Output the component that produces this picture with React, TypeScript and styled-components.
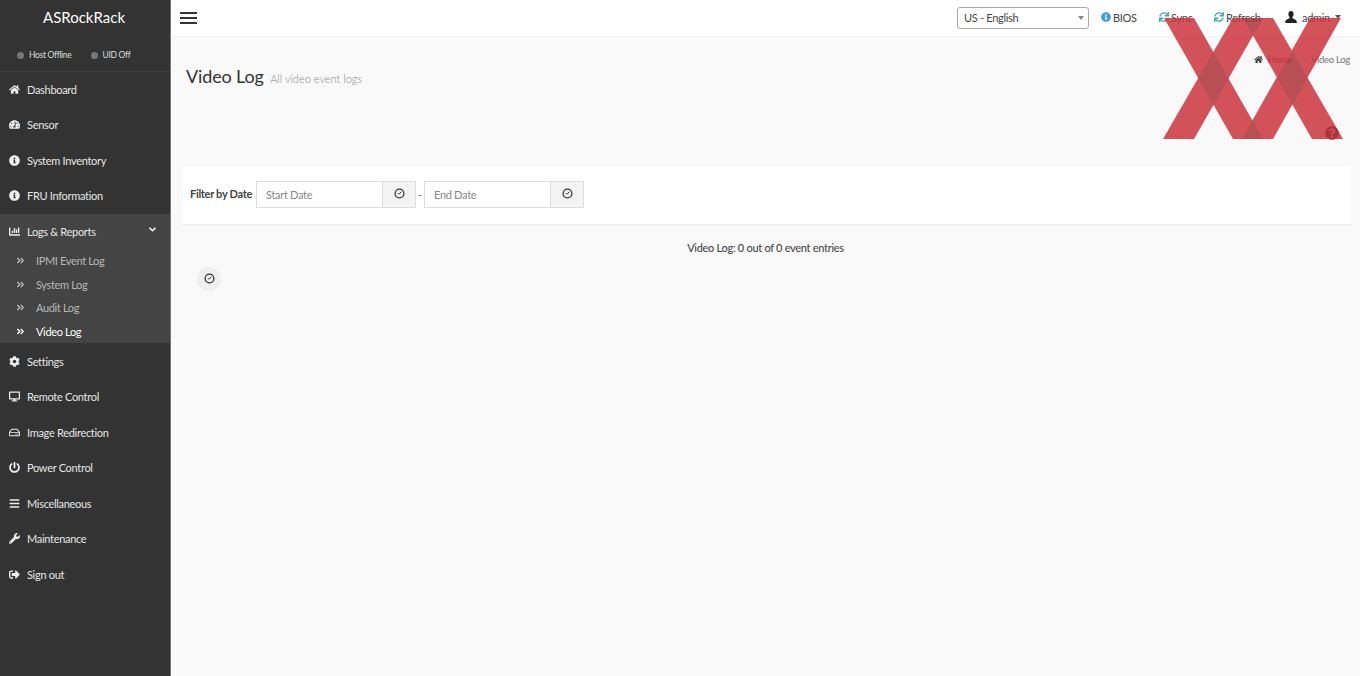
import styled, { createGlobalStyle } from "styled-components";
import type { ReactNode } from "react";
import {
  FaAngleDoubleRight,
  FaAngleDown,
  FaBars,
  FaChartBar,
  FaCog,
  FaDesktop,
  FaHome,
  FaInfoCircle,
  FaPowerOff,
  FaQuestionCircle,
  FaRegHdd,
  FaSignOutAlt,
  FaSync,
  FaTachometerAlt,
  FaWrench,
} from "react-icons/fa";

const GlobalStyle = createGlobalStyle`
  html, body {
    margin: 0;
    height: 100%;
    overflow: hidden;
    background: #f9f9f9;
  }

  body {
    font-family: "Lato", "Noto Sans", sans-serif;
    font-size: 11px;
    letter-spacing: -0.3px;
    color: #444;
  }
`;

const Shell = styled.div`
  display: flex;
  width: 1360px;
  height: 676px;
  position: relative;
  overflow: hidden;
`;

const Sidebar = styled.aside`
  width: 170px;
  flex: none;
  background: #333;
  border-right: 1px solid #777;
`;

const Brand = styled.div`
  height: 36px;
  display: flex;
  align-items: center;
  justify-content: center;
  padding-right: 2px;
  padding-bottom: 2px;
  box-sizing: border-box;
  color: #fff;
  font-size: 15px;
  letter-spacing: 0;
`;

const StatusRow = styled.div`
  height: 35.5px;
  box-sizing: border-box;
  padding: 4px 0 0 17px;
  display: flex;
  align-items: center;
  gap: 19px;
  border-bottom: 1px solid #3d3d3d;
  color: #ddd;
  font-size: 8.5px;
`;

const StatusItem = styled.span`
  display: flex;
  align-items: center;
  gap: 5px;
`;

const StatusDot = styled.i`
  width: 7px;
  height: 7px;
  border-radius: 50%;
  background: #777;
`;

const NavRow = styled.div<{ $open?: boolean }>`
  height: 35.5px;
  display: flex;
  align-items: center;
  padding-left: 9px;
  color: #e6e6e6;
  background: ${(p) => (p.$open ? "#444" : "transparent")};
`;

const NavIcon = styled.span`
  width: 18px;
  flex: none;
  display: flex;
  align-items: center;
  font-size: 11px;
  color: #eee;
`;

const Chevron = styled.span`
  margin-left: auto;
  margin-right: 12px;
  margin-top: -4px;
  display: flex;
  font-size: 11px;
`;

const SubMenu = styled.div`
  background: #444;
`;

const SubRow = styled.div<{ $active?: boolean }>`
  height: 23.6px;
  display: flex;
  align-items: center;
  padding-left: 16px;
  gap: 11px;
  letter-spacing: -0.35px;
  color: ${(p) => (p.$active ? "#fff" : "#b8b8b8")};
`;

const Main = styled.main`
  flex: 1;
  min-width: 0;
  display: flex;
  flex-direction: column;
`;

const Topbar = styled.header`
  height: 36px;
  background: #fff;
  border-bottom: 1px solid #f2f2f2;
  display: flex;
  align-items: center;
  padding: 0 15px 0 9px;
  color: #444;
`;

const BurgerIcon = styled.span`
  display: flex;
  flex-direction: column;
  gap: 3px;
  width: 17px;
  margin-right: auto;

  i {
    height: 2px;
    background: #333;
  }
`;

const LangSelect = styled.div`
  width: 132px;
  height: 22px;
  box-sizing: border-box;
  border: 1px solid #aaa;
  border-radius: 3px;
  display: flex;
  align-items: center;
  justify-content: space-between;
  padding: 0 4px 2px 6px;
  margin-right: 12px;

  &::after {
    content: "";
    margin-top: 2px;
    border-left: 3.5px solid transparent;
    border-right: 3.5px solid transparent;
    border-top: 4px solid #888;
  }
`;

const TopLink = styled.span<{ $tint?: string; $width: number }>`
  width: ${(p) => p.$width}px;
  display: flex;
  align-items: center;
  gap: 2px;
  margin-top: -2px;

  svg {
    color: ${(p) => p.$tint ?? "#333"};
    font-size: 10px;
  }
`;

const Caret = styled.i`
  border-left: 3.5px solid transparent;
  border-right: 3.5px solid transparent;
  border-top: 4px solid #555;
  margin-left: 3px;
`;

const PageHead = styled.section`
  height: 129px;
  box-sizing: border-box;
  display: flex;
  justify-content: space-between;
  align-items: flex-start;
  padding: 17px 10px 0 15px;
`;

const Title = styled.h1`
  margin: 10px 0 0;
  font-size: 18px;
  font-weight: 400;
  letter-spacing: -0.15px;
  color: #333;
  line-height: 24px;

  small {
    margin-left: 2px;
    font-size: 11px;
    font-weight: 300;
    letter-spacing: 0;
    color: #888;
  }
`;

const Crumbs = styled.div`
  display: flex;
  align-items: center;
  gap: 5px;
  font-size: 9.5px;
  color: #444;

  span + span {
    margin-left: 14px;
    color: #777;
  }
`;

const HelpIcon = styled.span`
  position: absolute;
  left: 1325px;
  top: 126px;
  color: #a9343c;
  font-size: 14px;
  display: flex;
  z-index: 3;
`;

const FilterCard = styled.section`
  margin: 0 9px 0 12px;
  height: 58px;
  box-sizing: border-box;
  background: #fff;
  box-shadow: 0 1px 1px rgba(0, 0, 0, 0.05);
  display: flex;
  align-items: center;
  padding: 0 0 2px 7px;
`;

const FilterLabel = styled.label`
  font-weight: 700;
  color: #444;
  width: 66px;
  flex: none;
  white-space: nowrap;
  margin-top: -1px;
`;

const DateGroup = styled.div`
  display: flex;
  height: 27px;
  border: 1px solid #ddd;
  box-sizing: border-box;
`;

const DateText = styled.div`
  width: 125px;
  box-sizing: border-box;
  padding-left: 9px;
  display: flex;
  align-items: center;
  color: #888;
`;

const DateAddon = styled.div`
  width: 33px;
  box-sizing: border-box;
  background: #f4f4f4;
  border-left: 1px solid #ddd;
  display: flex;
  align-items: center;
  justify-content: center;
  padding-bottom: 1px;
`;

const Dash = styled.span`
  width: 8px;
  text-align: center;
  color: #777;
`;

const EntryCount = styled.p`
  margin: 15.5px 0 0;
  text-align: center;
  color: #4a4a4a;
  font-weight: 500;
  line-height: 15px;
`;

const ClockBadge = styled.div`
  width: 24px;
  height: 24px;
  margin: 12px 0 0 26px;
  border-radius: 50%;
  background: #efefef;
  display: flex;
  align-items: center;
  justify-content: center;
`;

const Watermark = styled.svg`
  position: absolute;
  left: 1160px;
  top: 15px;
  pointer-events: none;
  z-index: 2;
`;

const ClockIcon = () => (
  <svg width="11" height="11" viewBox="0 0 11 11" fill="none" stroke="#333">
    <circle cx="5.5" cy="5.5" r="4.4" strokeWidth="1.3" />
    <path d="M5.5 5.8 7.3 3.6M5.5 5.8H3.8" strokeWidth="1" />
  </svg>
);

const UserIcon = () => (
  <svg width="12" height="12" viewBox="0 0 12 12" style={{ marginRight: 3 }}>
    <path d="M6 0C4.3 0 3.4 1.3 3.4 3c0 1.300.5 2.400 1.200 3v1.300C3 8 .6 8.600.3 10.300V12h11.400v-1.700C11.400 8.600 9 8 7.400 7.300V6c.7-.6 1.200-1.700 1.200-3C8.600 1.300 7.700 0 6 0Z" fill="#222" />
  </svg>
);

const navTop: [ReactNode, string][] = [
  [<FaHome />, "Dashboard"],
  [<FaTachometerAlt />, "Sensor"],
  [<FaInfoCircle />, "System Inventory"],
  [<FaInfoCircle />, "FRU Information"],
];

const navBottom: [ReactNode, string][] = [
  [<FaCog />, "Settings"],
  [<FaDesktop />, "Remote Control"],
  [<FaRegHdd />, "Image Redirection"],
  [<FaPowerOff />, "Power Control"],
  [<FaBars />, "Miscellaneous"],
  [<FaWrench />, "Maintenance"],
  [<FaSignOutAlt />, "Sign out"],
];

const subItems = ["IPMI Event Log", "System Log", "Audit Log", "Video Log"];

// the two crossed bands over the top right corner
const bands = [
  "4,3 34,3 103,124 73,124",
  "3,124 34,124 103,3 73,3",
  "83,3 113,3 183,124 152,124",
  "82,124 113,124 181,3 150,3",
];

const overlaps = [
  "53.5,37 68.5,63.5 53.5,90 38,63",
  "132.5,37 147.500,63.5 132.5,90 117,63",
  "83,3 103,3 93,20.5",
  "82,124 103,124 92.5,105.5",
];

const App = () => {
  return (
    <Shell>
      <GlobalStyle />
      <Sidebar>
        <Brand>ASRockRack</Brand>
        <StatusRow>
          <StatusItem>
            <StatusDot />
            Host Offline
          </StatusItem>
          <StatusItem>
            <StatusDot />
            UID Off
          </StatusItem>
        </StatusRow>
        {navTop.map(([icon, label]) => (
          <NavRow key={label}>
            <NavIcon>{icon}</NavIcon>
            {label}
          </NavRow>
        ))}
        <NavRow $open>
          <NavIcon>
            <FaChartBar />
          </NavIcon>
          Logs &amp; Reports
          <Chevron>
            <FaAngleDown />
          </Chevron>
        </NavRow>
        <SubMenu>
          {subItems.map((item) => (
            <SubRow key={item} $active={item === "Video Log"}>
              <FaAngleDoubleRight size={9} />
              {item}
            </SubRow>
          ))}
        </SubMenu>
        {navBottom.map(([icon, label]) => (
          <NavRow key={label}>
            <NavIcon>{icon}</NavIcon>
            {label}
          </NavRow>
        ))}
      </Sidebar>

      <Main>
        <Topbar>
          <BurgerIcon>
            <i />
            <i />
            <i />
          </BurgerIcon>
          <LangSelect>US - English</LangSelect>
          <TopLink $width={58} $tint="#3c9fe0">
            <FaInfoCircle />
            BIOS
          </TopLink>
          <TopLink $width={55} $tint="#4a9fc8">
            <FaSync />
            Sync
          </TopLink>
          <TopLink $width={71} $tint="#3fa7b5">
            <FaSync />
            Refresh
          </TopLink>
          <TopLink $width={60}>
            <UserIcon />
            admin
            <Caret />
          </TopLink>
        </Topbar>

        <PageHead>
          <Title>
            Video Log <small>All video event logs</small>
          </Title>
          <Crumbs>
            <FaHome size={9} />
            <span>Home</span>
            <span>Video Log</span>
          </Crumbs>
        </PageHead>

        <FilterCard>
          <FilterLabel>Filter by Date</FilterLabel>
          <DateGroup>
            <DateText>Start Date</DateText>
            <DateAddon>
              <ClockIcon />
            </DateAddon>
          </DateGroup>
          <Dash>-</Dash>
          <DateGroup>
            <DateText>End Date</DateText>
            <DateAddon>
              <ClockIcon />
            </DateAddon>
          </DateGroup>
        </FilterCard>

        <EntryCount>Video Log: 0 out of 0 event entries</EntryCount>
        <ClockBadge>
          <ClockIcon />
        </ClockBadge>
      </Main>

      <HelpIcon>
        <FaQuestionCircle />
      </HelpIcon>
      <Watermark width="190" height="130" viewBox="0 0 190 130">
        <g opacity="0.85">
          {bands.map((points) => (
            <polygon key={points} points={points} fill="#cd343e" />
          ))}
          {overlaps.map((points) => (
            <polygon key={points} points={points} fill="#ad3238" />
          ))}
        </g>
      </Watermark>
    </Shell>
  );
};

export default App;
